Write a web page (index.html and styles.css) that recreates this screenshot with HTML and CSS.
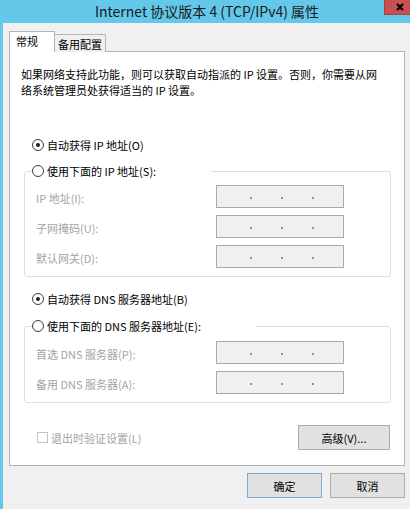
FILE: index.html
```html
<!DOCTYPE html>
<html lang="zh-CN">
<head>
<meta charset="utf-8">
<title>Internet 协议版本 4 (TCP/IPv4) 属性</title>
<link rel="stylesheet" href="styles.css">
</head>
<body>
<div class="window">
  <div class="titlebar">
    <span class="title">Internet 协议版本 4 (TCP/IPv4) 属性</span>
    <div class="close">
      <svg width="8" height="8" viewBox="0 0 8 8"><path d="M1 1 L7 7 M7 1 L1 7" stroke="#000" stroke-width="2.2" fill="none"/></svg>
    </div>
  </div>
  <div class="main">
    <div class="tabs">
      <div class="tab active">常规</div>
      <div class="tab">备用配置</div>
    </div>
    <div class="panel">
      <p class="desc">如果网络支持此功能，则可以获取自动指派的 IP 设置。否则，你需要从网<br>络系统管理员处获得适当的 IP 设置。</p>

      <div class="radio first"><span class="circle checked"></span><span>自动获得 IP 地址(O)</span></div>

      <fieldset class="group">
        <legend><div class="radio"><span class="circle"></span><span>使用下面的 IP 地址(S):</span></div></legend>
        <div class="rows">
          <span class="label">IP 地址(I):</span>
          <div class="ip"><i></i><i></i><i></i></div>
          <span class="label">子网掩码(U):</span>
          <div class="ip"><i></i><i></i><i></i></div>
          <span class="label">默认网关(D):</span>
          <div class="ip"><i></i><i></i><i></i></div>
        </div>
      </fieldset>

      <div class="radio second"><span class="circle checked"></span><span>自动获得 DNS 服务器地址(B)</span></div>

      <fieldset class="group dns">
        <legend><div class="radio"><span class="circle"></span><span>使用下面的 DNS 服务器地址(E):</span></div></legend>
        <div class="rows">
          <span class="label">首选 DNS 服务器(P):</span>
          <div class="ip"><i></i><i></i><i></i></div>
          <span class="label">备用 DNS 服务器(A):</span>
          <div class="ip"><i></i><i></i><i></i></div>
        </div>
      </fieldset>

      <div class="footer">
        <div class="check"><span class="box"></span><span>退出时验证设置(L)</span></div>
        <button class="btn advanced">高级(V)...</button>
      </div>
    </div>
    <div class="actions">
      <button class="btn default">确定</button>
      <button class="btn">取消</button>
    </div>
  </div>
</div>
</body>
</html>
```
FILE: styles.css
```css
html, body {
  margin: 0;
  padding: 0;
}
body {
  width: 410px;
  height: 509px;
  overflow: hidden;
  background: #f0f0f0;
  font-family: "Noto Sans CJK SC", "Liberation Sans", sans-serif;
  font-size: 11px;
  line-height: 16px;
  color: #000;
}
.window {
  display: flex;
  flex-direction: column;
  height: 509px;
}
.titlebar {
  position: relative;
  height: 23px;
  background: #63c8e9;
  display: flex;
  justify-content: center;
  align-items: center;
  flex-shrink: 0;
}
.title {
  font-size: 14px;
  line-height: 23px;
  color: #1a1a1a;
  padding-left: 4px;
}
.close {
  position: absolute;
  right: 0;
  top: 0;
  width: 26px;
  height: 15px;
  box-sizing: border-box;
  background: #c75050;
  border-left: 1px solid #a84040;
  border-bottom: 1px solid #a84040;
  display: flex;
  align-items: center;
  justify-content: center;
  padding-left: 4px;
}
.main {
  flex: 1;
  border-left: 3px solid #63c8e9;
  padding: 9px 5px 0 6px;
  display: flex;
  flex-direction: column;
}
.tabs {
  display: flex;
  align-items: flex-end;
  height: 20px;
  margin-bottom: -1px;
  position: relative;
  z-index: 1;
}
.tab {
  height: 18px;
  box-sizing: border-box;
  border: 1px solid #b4b4b4;
  border-bottom: 0;
  border-left: 0;
  padding: 1px 3px 0 3px;
  background: #f0f0f0;
  line-height: 16px;
}
.tab.active {
  height: 21px;
  border-left: 1px solid #b4b4b4;
  background: #fff;
  padding: 1px 16px 0 6px;
}
.panel {
  background: #fff;
  border: 1px solid #b4b4b4;
  display: flex;
  flex-direction: column;
  padding-bottom: 15px;
}
.desc {
  margin: 14px 0 0 11px;
  white-space: nowrap;
}
.radio {
  display: flex;
  align-items: center;
  gap: 3px;
  line-height: 16px;
  white-space: nowrap;
}
.radio.first {
  margin: 39px 0 0 22px;
}
.radio.second {
  margin: 14px 0 0 22px;
}
.circle {
  width: 12px;
  height: 12px;
  box-sizing: border-box;
  border: 1px solid #3c3c3c;
  border-radius: 50%;
  background: #fff;
  display: flex;
  align-items: center;
  justify-content: center;
  flex-shrink: 0;
}
.circle.checked::after {
  content: "";
  width: 4px;
  height: 4px;
  border-radius: 50%;
  background: #222;
}
.group {
  margin: 10px 13px 0 14px;
  border: 1px solid #dce0e4;
  border-radius: 3px;
  padding: 6px 0 8px 7px;
  min-width: 0;
}
.group.dns {
  margin-top: 11px;
  padding-top: 7px;
}
.group legend {
  padding: 0 55px 0 0;
}
.rows {
  margin-left: 4px;
  display: grid;
  grid-template-columns: 180px 128px;
  row-gap: 7px;
  align-items: center;
}
.label {
  color: #a3a3a3;
  padding-top: 2px;
}
.ip {
  height: 23px;
  box-sizing: border-box;
  border: 1px solid #a9a9a9;
  background: #f0f0f0;
  display: flex;
  align-items: center;
  padding-left: 33px;
  gap: 29px;
}
.ip i {
  display: block;
  width: 2px;
  height: 2px;
  background: #8c8fa0;
  margin-top: 2px;
}
.footer {
  margin: 22px 14px 0 27px;
  display: flex;
  justify-content: space-between;
  align-items: center;
}
.check {
  display: flex;
  align-items: center;
  gap: 3px;
  color: #a3a3a3;
}
.box {
  width: 11px;
  height: 11px;
  box-sizing: border-box;
  border: 1px solid #c4c4c4;
  background: #fff;
}
.btn {
  font-family: "Noto Sans CJK SC", "Liberation Sans", sans-serif;
  font-size: 11px;
  line-height: 16px;
  color: #000;
  height: 25px;
  width: 75px;
  box-sizing: border-box;
  border: 1px solid #adadad;
  background: #e1e1e1;
  padding: 0;
  margin: 0;
}
.btn.advanced {
  width: 92px;
}
.btn.default {
  border-color: #7ea8d8;
}
.actions {
  display: flex;
  justify-content: flex-end;
  gap: 8px;
  margin-top: 7px;
}
```
